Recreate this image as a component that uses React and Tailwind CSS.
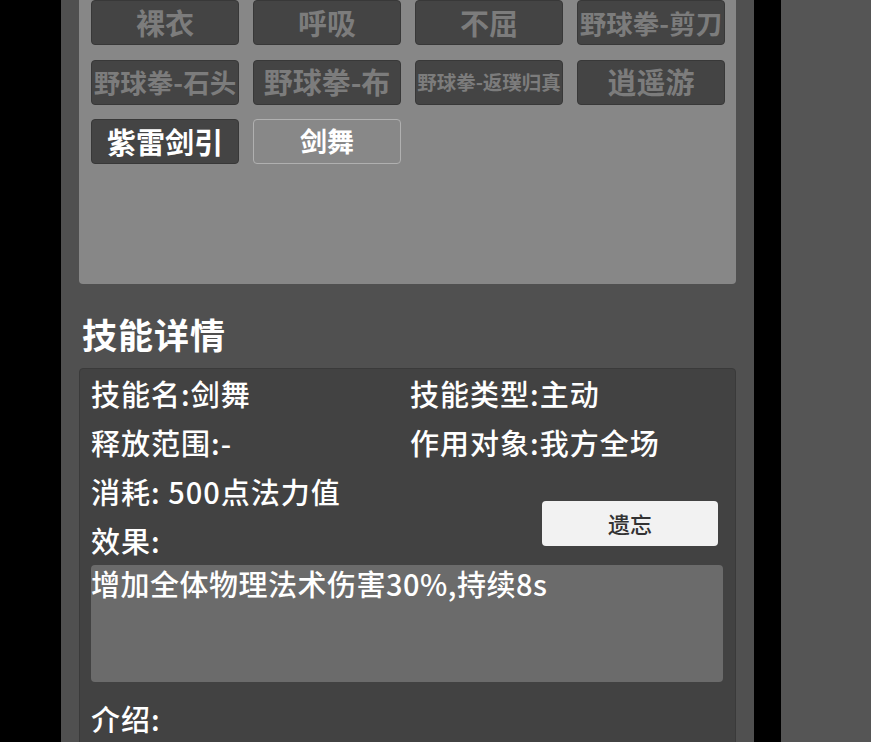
import React from "react";

const skills = [
  { name: "裸衣", size: "text-[29px]", state: "off" },
  { name: "呼吸", size: "text-[29px]", state: "off" },
  { name: "不屈", size: "text-[29px]", state: "off" },
  { name: "野球拳-剪刀", size: "text-[26.5px]", state: "off" },
  { name: "野球拳-石头", size: "text-[26.5px]", state: "off" },
  { name: "野球拳-布", size: "text-[29px]", state: "off" },
  { name: "野球拳-返璞归真", size: "text-[19.5px]", state: "off" },
  { name: "逍遥游", size: "text-[29px]", state: "off" },
  { name: "紫雷剑引", size: "text-[29px]", state: "on" },
  { name: "剑舞", size: "text-[27px]", state: "selected" },
];

function SkillButton({ skill }) {
  const base =
    "flex h-[45px] items-center justify-center overflow-hidden whitespace-nowrap rounded-[4px] font-bold";
  if (skill.state === "selected") {
    return (
      <div className={`${base} border border-[#b0b0b0] bg-[#888888] text-white ${skill.size}`}>
        {skill.name}
      </div>
    );
  }
  return (
    <div
      className={`${base} border border-[#383838] bg-[#444444] ${skill.size} ${
        skill.state === "on" ? "text-white" : "text-[#7c7c7c]"
      }`}
    >
      {skill.name}
    </div>
  );
}

export default function App() {
  return (
    <div className="flex h-[742px] w-[871px] overflow-hidden bg-black font-['Noto_Sans_CJK_SC','Noto_Sans',sans-serif]">
      <div className="w-[61px] shrink-0" />

      {/* 主面板 */}
      <div className="w-[693px] shrink-0 bg-[#505050] px-[18px]">
        {/* 技能列表 */}
        <div className="-mt-[12px] h-[296px] rounded-[4px] bg-[#878787] pl-[12px] pt-[12px]">
          <div className="grid grid-cols-[repeat(4,148px)] gap-x-[14px] gap-y-[14.5px]">
            {skills.map((s) => (
              <SkillButton key={s.name} skill={s} />
            ))}
          </div>
        </div>

        <h2 className="mb-[17px] mt-[33px] pl-[3px] text-[35px] font-bold leading-[34px] tracking-[1px] text-white">
          技能详情
        </h2>

        {/* 技能详情 */}
        <div className="h-[420px] rounded-[4px] border border-[#3a3a3a] bg-[#424242] pl-[11px] text-[29px] font-medium leading-[49px] tracking-[1px] text-white">
          <div className="flex">
            <div className="w-[319px]">技能名:剑舞</div>
            <div>技能类型:主动</div>
          </div>
          <div className="flex">
            <div className="w-[319px]">释放范围:-</div>
            <div>作用对象:我方全场</div>
          </div>
          <div className="flex">
            <div className="w-[319px]">
              <div>消耗: 500点法力值</div>
              <div>效果:</div>
            </div>
            <div>
              <button className="ml-[132px] mt-[34px] flex h-[45px] w-[176px] items-center justify-center rounded-[4px] bg-[#f2f2f2] text-[22px] font-medium tracking-normal text-[#333333]">
                遗忘
              </button>
            </div>
          </div>

          <div className="h-[117px] w-[632px] rounded-[4px] bg-[#6b6b6b] leading-[36px] tracking-[0.5px]">
            增加全体物理法术伤害30%,持续8s
          </div>

          <div className="mt-[12px]">介绍:</div>
        </div>
      </div>

      <div className="w-[27px] shrink-0" />
      <div className="flex-1 bg-[#555555]" />
    </div>
  );
}
